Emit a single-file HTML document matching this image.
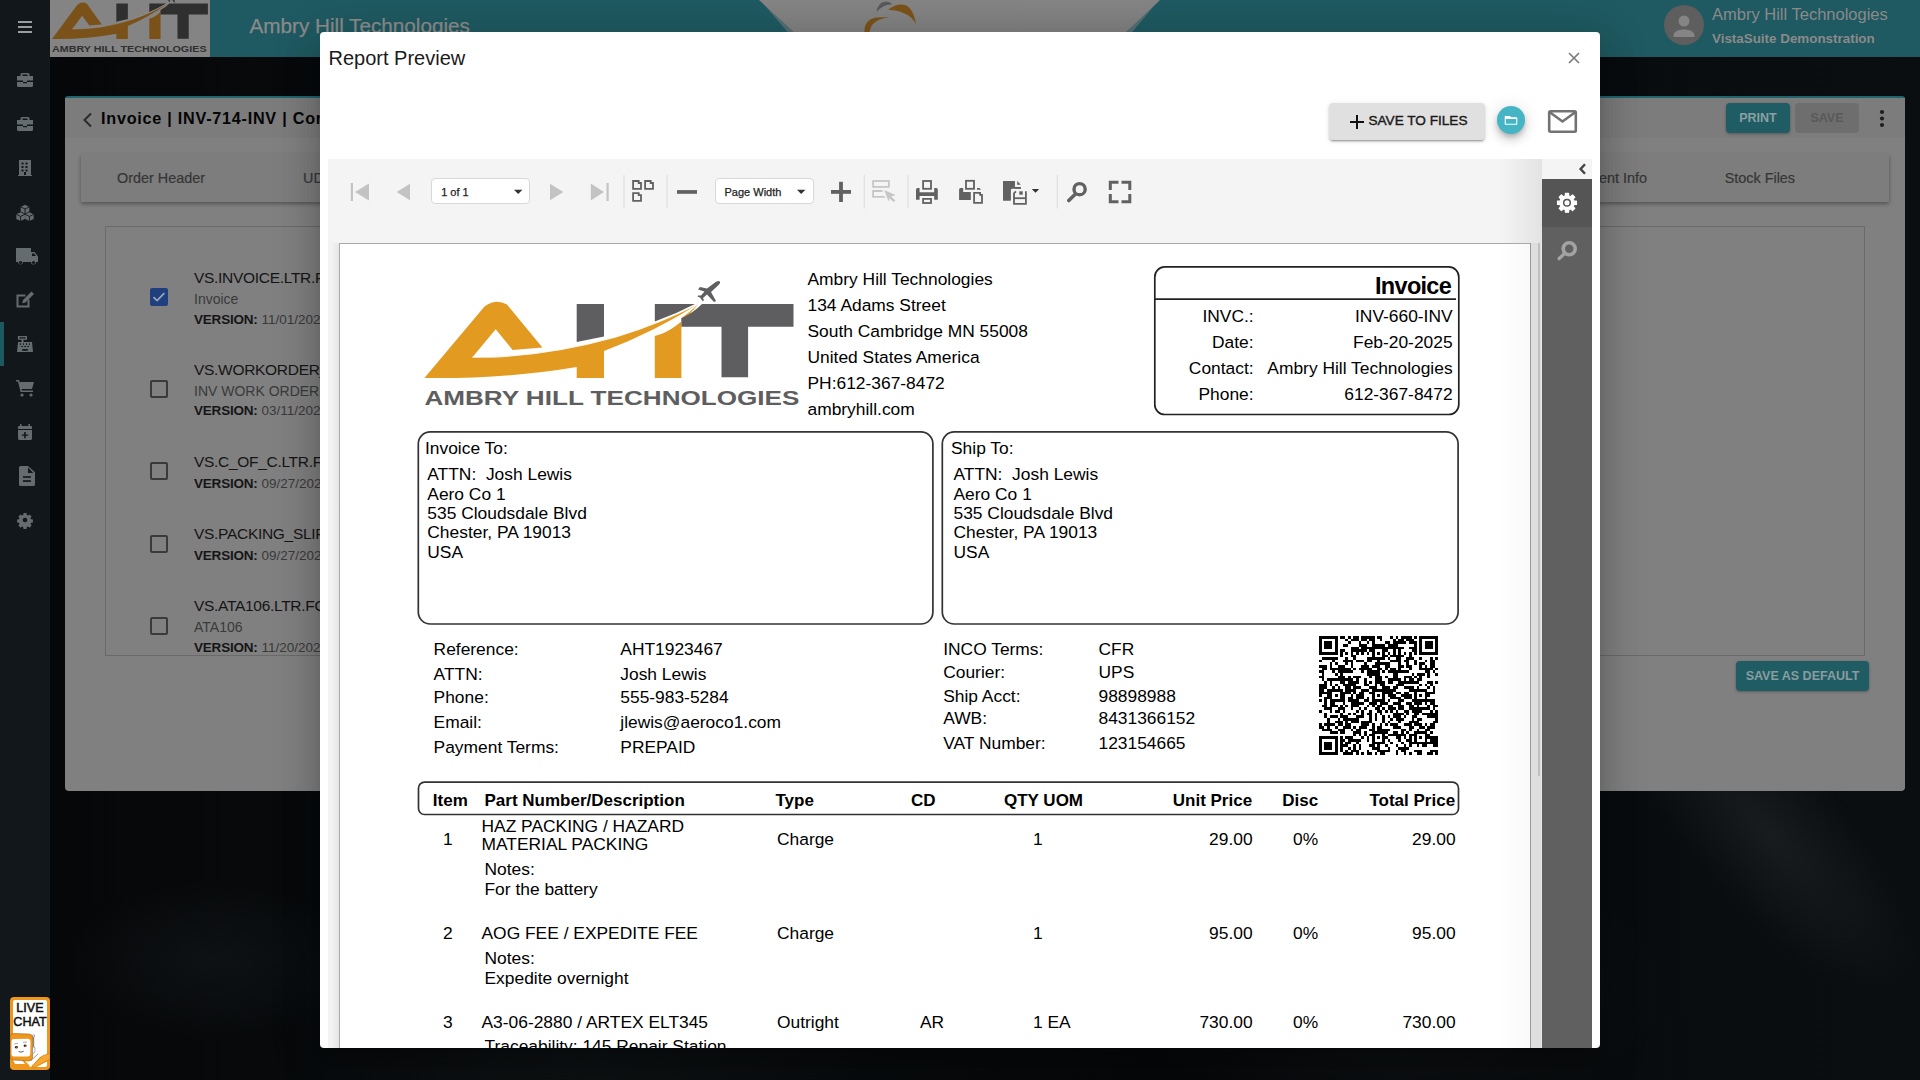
<!DOCTYPE html>
<html><head><meta charset="utf-8">
<style>
*{margin:0;padding:0;box-sizing:border-box}
html,body{width:1920px;height:1080px;overflow:hidden}
body{position:relative;background:#07090b;font-family:"Liberation Sans",sans-serif;color:#000}
.abs{position:absolute}
#bgtex{left:50px;top:57px;width:1870px;height:1023px;background:
 radial-gradient(ellipse 260px 160px at 1350px 930px, rgba(24,28,30,.5), transparent),
 radial-gradient(ellipse 300px 200px at 520px 1000px, rgba(18,22,24,.5), transparent),
 linear-gradient(90deg,#050709 0,#0a0d0f 30%,#06080a 60%,#0b0e10 100%)}
#side{left:0;top:0;width:50px;height:1080px;background:#11171b}
#hdr{left:50px;top:0;width:1870px;height:57px;background:#1f5961}
#logobox{left:50px;top:0;width:160px;height:57px;background:#848484;overflow:hidden}
#hdrtitle{left:249.5px;top:13.5px;font-size:20.7px;color:#8b8b8b;-webkit-text-stroke:.25px #8b8b8b;white-space:nowrap}
#trap{left:759px;top:0;width:401px;height:57px;background:linear-gradient(#858585,#7a7a7a);
 clip-path:polygon(0 0,100% 0,91.5% 56%,8.7% 56%)}
#card{left:65px;top:96px;width:1840px;height:695px;background:#808080;border-top:2px solid #1f646c;border-radius:3px 3px 4px 4px}
#cardhead{left:0;top:0;width:1840px;height:40px;background:#7c7c7c}
.ctitle{left:36px;top:11.4px;font-size:16.2px;font-weight:bold;color:#050505;white-space:nowrap;letter-spacing:.75px}
#tabs{left:16px;top:56px;width:1808px;height:48px;background:#7d7d7d;box-shadow:0 2px 4px rgba(0,0,0,.35)}
.tab{top:16px;font-size:14.4px;color:#363636;white-space:nowrap;-webkit-text-stroke:.2px #363636}
#inner{left:40px;top:128px;width:1760px;height:430px;border:1px solid #6a6a6a}
.cb{width:18px;height:18px;border:2px solid #3a3a3a;border-radius:2px}
.it1{letter-spacing:-.3px;font-size:15.5px;color:#151515;white-space:nowrap}
.it2{font-size:14px;color:#3a3a3a;white-space:nowrap}
.it3{font-size:13.5px;color:#3a3a3a;white-space:nowrap}
.it3 b{color:#161616;letter-spacing:-.2px}
.btn{height:30px;border-radius:4px;font-size:12.5px;font-weight:bold;text-align:center;line-height:30px;letter-spacing:0}
#modal{left:320px;top:32px;width:1280px;height:1016px;background:#fff;border-radius:4px;box-shadow:0 11px 15px -7px rgba(0,0,0,.2),0 24px 38px 3px rgba(0,0,0,.14),0 9px 46px 8px rgba(0,0,0,.12)}
.t{position:absolute;white-space:nowrap;line-height:normal}
.dd{background:#fff;border:1px solid #d8d8d8;border-radius:4px}
</style></head><body>
<div id="bgtex" class="abs"></div>
<div class="abs" style="left:1560px;top:760px;width:420px;height:150px;background:radial-gradient(ellipse at center,rgba(40,46,48,.45),rgba(40,46,48,0) 70%);transform:rotate(48deg);transform-origin:center"></div>
<div class="abs" style="left:60px;top:880px;width:300px;height:160px;background:radial-gradient(ellipse at center,rgba(30,34,36,.35),rgba(30,34,36,0) 70%)"></div>
<div id="side" class="abs"></div>
<div id="hdr" class="abs"></div>
<div class="abs" style="left:0;top:0;width:1920px;height:57px;overflow:hidden"><div class="abs" style="left:755px;top:-6px;width:409px;height:69px;background:rgba(128,128,128,.55);clip-path:polygon(0 0,100% 0,91.5% 60%,8.7% 60%);filter:blur(6px)"></div></div>
<div id="trap" class="abs"></div>
<svg class="abs" style="left:850px;top:0" width="80" height="32" viewBox="850 0 80 32">
 <path d="M876.5 12 Q878 2 886 1.6 Q890 1.8 892.5 4.6 Q884 3.5 876.5 12z" fill="#585858"/>
 <path d="M888 9.8 Q896 3.5 904 4.8 Q913 7 916 24 Q909 11 888 9.8z" fill="#7a5219"/>
 <path d="M864.5 32 Q864 20 876 17.6 Q883 16.8 889.5 17.4 Q871 19 869.5 32z" fill="#7a5219"/>
</svg>
<div id="logobox" class="abs"><svg width="160" height="57" viewBox="418.67 295.7 378.8 118.75" preserveAspectRatio="none"><path d="M423.4 377 L483.5 305.5 Q494.7 297 506 303.5 L541.4 346.5 L511.6 349 L494.7 328.3 L471.4 356.2 Q540 357 615 336 Q660 322 697.9 302.4 Q675 330 653.8 335 L653.8 377 L680.4 377 L680.4 317.3 Q690 310 697.9 302.4 Q655 330 603 350 L603 377 L575.7 377 L575.7 366 Q505 378 423.4 377 Z" fill="#7a5219"/>
<path d="M575.7 303 H603 V335.5 L575.7 341 Z" fill="#2f2f2f"/>
<path d="M653.8 303 H694 Q675 313 653.8 320.5 Z" fill="#2f2f2f"/>
<path d="M701 303 H792.5 V325.7 H747.1 V376.3 H720.5 V325.7 H680.4 V317.3 Q692 312 701 303 Z" fill="#2f2f2f"/>
<path d="M471.4 356.2 Q540 357 615 336 Q660 322 697.9 302.4" fill="none" stroke="#9a9a9a" stroke-width="1.2" opacity=".8"/>
<path d="M699 286 L706 287.5 L714 281.5 Q717 279 719 280.5 Q719.5 282.5 716.5 285 L710 291 L715 300 L713 301 L706 293.5 L702 297 L703 299.5 L701.5 300 L699 296.5 L696.5 295.5 L697 294.5 L700 294.5 L703.5 290.5 L697 288.5 Z" fill="#2f2f2f"/>
<text x="423.4" y="403.5" font-family="Liberation Sans" font-weight="bold" font-size="19.6" textLength="366" lengthAdjust="spacingAndGlyphs" fill="#2f2f2f">AMBRY HILL TECHNOLOGIES</text></svg></div>
<div id="hdrtitle" class="abs">Ambry Hill Technologies</div>
<!-- sidebar icons -->
<svg class="abs" style="left:0;top:0" width="50" height="540" viewBox="0 0 50 540">
 <g fill="#9c9c9c"><rect x="18" y="21" width="14" height="2"/><rect x="18" y="26" width="14" height="2"/><rect x="18" y="31" width="14" height="2"/></g>
 <g fill="#656c70">
  <!-- briefcase 1 -->
  <path d="M22 73h6a1.5 1.5 0 0 1 1.5 1.5V76H33a0 0 0 0 1 0 0v4.5H27v1.5h-4v-1.5H17V76h3.5v-1.5A1.5 1.5 0 0 1 22 73zm.5 1.6V76h5v-1.4zM17 82h6v1.3h4V82h6v3.5a1.5 1.5 0 0 1-1.5 1.5h-13A1.5 1.5 0 0 1 17 85.5z"/>
  <path d="M22 117h6a1.5 1.5 0 0 1 1.5 1.5V120H33v4.5H27v1.5h-4v-1.5H17V120h3.5v-1.5A1.5 1.5 0 0 1 22 117zm.5 1.6V120h5v-1.4zM17 126h6v1.3h4V126h6v3.5a1.5 1.5 0 0 1-1.5 1.5h-13A1.5 1.5 0 0 1 17 129.5z"/>
  <!-- building -->
  <path d="M19 160h12v15h1v1H18v-1h1zm2.5 2.5v2h2v-2zm4 0v2h2v-2zm-4 3.5v2h2v-2zm4 0v2h2v-2zm-4 3.5v2h2v-2zm4 0v2h2v-2zM24 172v3h2v-3z" fill-rule="evenodd"/>
  <!-- cubes -->
  <path d="M25 204.8l4.3 2.1v4.6l-4.3 2.1-4.3-2.1v-4.6zM20.6 212.2l4.3 2.1v4.6l-4.3 2.1-4.3-2.1v-4.6zM29.4 212.2l4.3 2.1v4.6l-4.3 2.1-4.3-2.1v-4.6z"/>
  <path d="M20.7 206.9l4.3 2.1 4.3-2.1M25 209v4.6M16.3 214.3l4.3 2.1 4.3-2.1M20.6 216.4v4.6M25.1 214.3l4.3 2.1 4.3-2.1M29.4 216.4v4.6" fill="none" stroke="#11171b" stroke-width=".9"/>
  <!-- truck -->
  <path d="M16 248h15v4h3.5l3.5 4.5V262h-2a2.5 2.5 0 0 1-5 0h-8a2.5 2.5 0 0 1-5 0H16zm16 5.5V256h4l-2-2.5z" fill-rule="evenodd"/>
  <circle cx="20.5" cy="262.5" r="1.6" fill="#11171b"/><circle cx="33.5" cy="262.5" r="1.6" fill="#11171b"/>
  <!-- edit -->
  <path d="M16.5 294.5h9v2h-7v9h9v-6h2v8h-13z"/>
  <path d="M31.5 291.5l2.5 2.5-8.5 8.5-3.3.8.8-3.3z"/>
  <!-- register -->
  <path d="M17.9 336h9.1v3.7h-3.5v2.3h8.5l1 9.9H17l1-9.9h3.5v-2.3h-3.6zM19.5 337.2v1.3h6v-1.3z" fill-rule="evenodd"/>
  <g fill="#11171b"><rect x="19.9" y="343.3" width="1" height="1.6"/><rect x="22.9" y="343.3" width="1" height="1.6"/><rect x="26" y="343.3" width="1" height="1.6"/><rect x="28.9" y="343.3" width="1" height="1.6"/>
  <rect x="21.2" y="346" width="1.8" height="1"/><rect x="24.2" y="346" width="1.8" height="1"/><rect x="27.2" y="346" width="1.8" height="1"/><rect x="22.2" y="349" width="5.6" height="1.8"/></g>
  <!-- cart -->
  <path d="M16 380h3l.6 2H34l-2 7H21.5l.4 1.5H33v1.6H20.6L18 381.6h-2z"/>
  <circle cx="22" cy="395" r="1.6"/><circle cx="31" cy="395" r="1.6"/>
  <!-- calendar -->
  <path d="M20 424h1.5v2h7v-2H30v2h1a1 1 0 0 1 1 1v2H18v-2a1 1 0 0 1 1-1h1zM18 430h14v8.5a1.5 1.5 0 0 1-1.5 1.5h-11a1.5 1.5 0 0 1-1.5-1.5zm6.2 2v2.4h-2.4v1.4h2.4v2.4h1.6v-2.4h2.4v-1.4h-2.4V432z" fill-rule="evenodd"/>
  <!-- file -->
  <path d="M20.5 466H28l7 6.2V484.4a1.5 1.5 0 0 1-1.5 1.5H20.5a1.5 1.5 0 0 1-1.5-1.5V467.5A1.5 1.5 0 0 1 20.5 466z"/>
  <path d="M28 467.4V473h5.4z" fill="#11171b"/>
  <rect x="23" y="476.2" width="7.9" height="1.6" fill="#11171b"/><rect x="23" y="480.2" width="7.9" height="1.7" fill="#11171b"/>
  <!-- gear -->
  <path transform="translate(25 520) scale(.86) translate(-25 -520)" d="M23.3 512h3.4l.4 2.2 1.3.6 1.9-1.3 2.4 2.4-1.3 1.9.6 1.3 2.2.4v3.4l-2.2.4-.6 1.3 1.3 1.9-2.4 2.4-1.9-1.3-1.3.6-.4 2.2h-3.4l-.4-2.2-1.3-.6-1.9 1.3-2.4-2.4 1.3-1.9-.6-1.3-2.2-.4v-3.4l2.2-.4.6-1.3-1.3-1.9 2.4-2.4 1.9 1.3 1.3-.6zM25 517.3a2.7 2.7 0 1 0 0 5.4 2.7 2.7 0 0 0 0-5.4z" fill-rule="evenodd"/>
 </g>
 <rect x="0" y="322" width="4" height="44" fill="#1d5961"/>
</svg>
<!-- header right -->
<div class="abs" style="left:1664px;top:5px;width:40px;height:40px;border-radius:50%;background:#5e5e5e;overflow:hidden">
  <svg width="40" height="40" viewBox="0 0 40 40"><circle cx="20" cy="16" r="5.5" fill="#858585"/><path d="M9.5 30.5c0-4 5-6 10.5-6s10.5 2 10.5 6v1.5h-21z" fill="#858585"/></svg>
</div>
<div class="abs" style="left:1712px;top:4.6px;font-size:16.5px;color:#8a8a8a;white-space:nowrap">Ambry Hill Technologies</div>
<div class="abs" style="left:1712px;top:30.9px;font-size:13.4px;font-weight:bold;color:#8a8a8a;white-space:nowrap">VistaSuite Demonstration</div>

<!-- card -->
<div id="card" class="abs">
  <div id="cardhead" class="abs"></div>
  <div class="abs ctitle">Invoice | INV-714-INV | Cor</div>
  <div class="abs btn" style="left:1661px;top:5px;width:64px;background:#1f5c64;color:#8aa0a3;box-shadow:0 1px 3px rgba(0,0,0,.3)">PRINT</div>
  <div class="abs btn" style="left:1730px;top:5px;width:64px;background:#6e6e6e;color:#595959">SAVE</div>
  <svg class="abs" style="left:17px;top:14px" width="12" height="16" viewBox="0 0 12 16"><path d="M9 1.5L2.5 8 9 14.5" fill="none" stroke="#2a2a2a" stroke-width="2"/></svg>
  <svg class="abs" style="left:1812px;top:11px" width="10" height="20" viewBox="0 0 10 20"><circle cx="5" cy="3" r="2.1" fill="#1e1e1e"/><circle cx="5" cy="9.5" r="2.1" fill="#1e1e1e"/><circle cx="5" cy="16" r="2.1" fill="#1e1e1e"/></svg>
  <div id="tabs" class="abs">
    <div class="abs tab" style="left:36px">Order Header</div>
    <div class="abs tab" style="left:222px">UDF</div>
    <div class="abs tab" style="right:242px">Document Info</div>
    <div class="abs tab" style="left:1643.7px">Stock Files</div>
  </div>
  <div id="inner" class="abs"></div>
  <!-- list items -->
  <div class="abs" style="left:85px;top:190px;width:18px;height:18px;border-radius:2px;background:#1f3f7e"><svg width="18" height="18" viewBox="0 0 18 18"><path d="M3.5 9.2l3.6 3.4 7.2-7.4" fill="none" stroke="#9aa5bd" stroke-width="1.8"/></svg></div>
  <div class="abs it1" style="left:129px;top:171px">VS.INVOICE.LTR.FORM</div>
  <div class="abs it2" style="left:129px;top:193px">Invoice</div>
  <div class="abs it3" style="left:129px;top:213.5px"><b>VERSION:</b> 11/01/2024</div>

  <div class="abs cb" style="left:85px;top:282px"></div>
  <div class="abs it1" style="left:129px;top:262.6px">VS.WORKORDER_INVOICE</div>
  <div class="abs it2" style="left:129px;top:284.8px">INV WORK ORDER INVOICE</div>
  <div class="abs it3" style="left:129px;top:304.8px"><b>VERSION:</b> 03/11/2024</div>

  <div class="abs cb" style="left:85px;top:364.4px"></div>
  <div class="abs it1" style="left:129px;top:354.9px">VS.C_OF_C.LTR.FORM</div>
  <div class="abs it3" style="left:129px;top:377.7px"><b>VERSION:</b> 09/27/2024</div>

  <div class="abs cb" style="left:85px;top:436.7px"></div>
  <div class="abs it1" style="left:129px;top:426.8px">VS.PACKING_SLIP.FORM</div>
  <div class="abs it3" style="left:129px;top:449.6px"><b>VERSION:</b> 09/27/2024</div>

  <div class="abs cb" style="left:85px;top:518.8px"></div>
  <div class="abs it1" style="left:129px;top:498.7px">VS.ATA106.LTR.FORM</div>
  <div class="abs it2" style="left:129px;top:520.7px">ATA106</div>
  <div class="abs it3" style="left:129px;top:541.6px"><b>VERSION:</b> 11/20/2024</div>

  <div class="abs btn" style="left:1671px;top:562.5px;width:133px;background:#1f5c64;color:#8a9c9f;box-shadow:0 1px 3px rgba(0,0,0,.3)">SAVE AS DEFAULT</div>
</div>
<!-- live chat -->
<div class="abs" style="left:10px;top:997px;width:40px;height:72.5px;border-radius:4px;background:#ef961c"></div>
<div class="abs" style="left:13px;top:1000px;width:34px;height:66.5px;border-radius:2px;background:#fff"></div>
<div class="abs" style="left:10px;top:1002px;width:40px;text-align:center;font-size:12.6px;line-height:13.8px;color:#111;-webkit-text-stroke:.5px #111">LIVE<br>CHAT</div>
<svg class="abs" style="left:10px;top:1030px" width="40" height="40" viewBox="0 30 40 40">
 <path d="M20 68 L30 57 L40 53 L40 60 L22 69 Z" fill="#ef961c"/>
 <path d="M22 66 L33 55.5 L40 53.2 L40 59 L23.5 68 Z" fill="#f5a833" stroke="#b86d10" stroke-width=".4"/>
 <path d="M1 60 Q6 56 12 58 L20 66 L18 69 L1 68 Z" fill="#ef961c"/>
 <path d="M3 60 Q8 57 12 60 L15 64 L5 64 Z" fill="#fff"/>
 <path d="M21 60.5 L28 54" stroke="#555" stroke-width=".6"/>
 <path d="M0 36 Q1 33 5 33.5 L19 34 Q23 34.5 23 38 L22.5 58 Q22 61 18.5 61 L3 60 Q0 59.5 0 56 Z" fill="#ef961c" stroke="#8a5410" stroke-width=".5"/>
 <path d="M1.5 41 Q1.5 39 4 39 L18 38.8 Q20.5 39 20.5 41.5 L20.3 54 Q20 56.5 17.5 56.5 L4 56.5 Q1.5 56.5 1.5 54 Z" fill="#fff"/>
 <ellipse cx="6.4" cy="47.3" rx="1.5" ry="1.3" fill="#3a2410"/><ellipse cx="15.1" cy="45.8" rx="1.5" ry="1.3" fill="#3a2410"/>
 <circle cx="6.8" cy="47.6" r=".6" fill="#e08a20"/><circle cx="15.5" cy="46.1" r=".6" fill="#e08a20"/>
 <path d="M4.5 44 Q6 43 8 43.5 M13 42.5 Q15 41.8 17 42.2" stroke="#555" stroke-width=".5" fill="none"/>
 <path d="M8.6 51.5 Q11 53 13.6 51.2" fill="none" stroke="#333" stroke-width=".8"/>
 <path d="M23.8 50 L23.6 37" stroke="#666" stroke-width=".9"/><circle cx="23.6" cy="36" r="1.2" fill="#fff" stroke="#666" stroke-width=".6"/>
 <rect x="22.5" y="47" width="2.4" height="6" rx="1" fill="#fff" stroke="#666" stroke-width=".5"/>
</svg>
<div id="modal" class="abs"></div>
<div class="t" style="left:328.5px;top:46.70px;font-size:20px;color:#1b1b1b;">Report Preview</div>
<svg class="abs" style="left:1567px;top:51px" width="14" height="14" viewBox="0 0 14 14"><path d="M2 2L12 12M12 2L2 12" stroke="#7a7a7a" stroke-width="1.6"/></svg>
<div class="abs" style="left:1329px;top:103px;width:156px;height:37px;border-radius:4px;background:#e0e0e0;box-shadow:0 3px 1px -2px rgba(0,0,0,.2),0 2px 2px 0 rgba(0,0,0,.14),0 1px 5px 0 rgba(0,0,0,.12)"></div>
<svg class="abs" style="left:1349px;top:114px" width="16" height="16" viewBox="0 0 16 16"><path d="M8 1v14M1 8h14" stroke="#111" stroke-width="2"/></svg>
<div class="t" style="left:1368.5px;top:113.49px;font-size:13.6px;color:#1a1a1a;-webkit-text-stroke:.4px #1a1a1a;">SAVE TO FILES</div>
<div class="abs" style="left:1497px;top:106px;width:28px;height:28px;border-radius:50%;background:#45b4c5;box-shadow:0 3px 5px -1px rgba(0,0,0,.2),0 6px 10px 0 rgba(0,0,0,.14),0 1px 18px 0 rgba(0,0,0,.12)"><svg width="28" height="28" viewBox="0 0 28 28"><path d="M9 10h4l1.2 1.3H19.5a.8.8 0 0 1 .8.8V18a.8.8 0 0 1-.8.8h-11a.8.8 0 0 1-.8-.8v-7.2A.8.8 0 0 1 9 10zm-.2 3.1v4.6h10.4v-4.6z" fill="#fff" fill-rule="evenodd"/></svg></div>
<svg class="abs" style="left:1547px;top:109px" width="32" height="25" viewBox="0 0 32 25"><rect x="2.2" y="2.2" width="26.6" height="20.6" rx="1.2" fill="none" stroke="#727272" stroke-width="2.6"/><path d="M2.8 3.2L15.5 12.5 28.2 3.2" fill="none" stroke="#727272" stroke-width="2.6"/></svg>
<div class="abs" style="left:328px;top:159px;width:1214px;height:889px;background:#f4f4f4"></div>
<div class="abs" style="left:1500px;top:159px;width:42px;height:84px;background:linear-gradient(90deg,rgba(0,0,0,0),rgba(0,0,0,.07))"></div>
<div class="abs" style="left:328px;top:243px;width:11px;height:805px;background:linear-gradient(90deg,#f4f4f4 0,#f2f2f2 40%,#e6e6e6 100%)"></div>
<svg class="abs" style="left:0;top:0" width="1920" height="260" viewBox="0 0 1920 260"><rect x="350.8" y="183" width="2.2" height="18" fill="#c3c3c3"/><path d="M355 192L369 183.5V200.5z" fill="#c3c3c3"/><path d="M396.7 192L410 183.8V200.2z" fill="#c3c3c3"/><path d="M563.3 192L550 183.8V200.2z" fill="#c3c3c3"/><rect x="606.5" y="183" width="2.2" height="18" fill="#c3c3c3"/><path d="M604 192L590.8 183.5V200.5z" fill="#c3c3c3"/><rect x="623.5" y="175" width="1" height="33.5" fill="#dcdcdc"/><rect x="666.5" y="175" width="1" height="33.5" fill="#dcdcdc"/><rect x="863.8" y="175" width="1" height="33.5" fill="#dcdcdc"/><rect x="907.5" y="175" width="1" height="33.5" fill="#dcdcdc"/><rect x="1056.8" y="175" width="1" height="33.5" fill="#dcdcdc"/><path d="M633.1 181.0H638.7V183.0H641.0000000000001V188.79999999999998H633.1z" fill="none" stroke="#616161" stroke-width="1.8" stroke-linejoin="miter"/><path d="M645.1 181.0H650.7V183.0H653.0000000000001V188.79999999999998H645.1z" fill="none" stroke="#616161" stroke-width="1.8" stroke-linejoin="miter"/><path d="M633.1 193.1H638.7V195.1H641.0000000000001V200.89999999999998H633.1z" fill="none" stroke="#616161" stroke-width="1.8" stroke-linejoin="miter"/><rect x="677" y="190.1" width="20" height="3.7" fill="#616161"/><rect x="831" y="190" width="20" height="3.8" fill="#616161"/><rect x="839.1" y="181.8" width="3.8" height="20.2" fill="#616161"/><rect x="873.1" y="181" width="15.8" height="5.9" fill="none" stroke="#c6c6c6" stroke-width="1.8"/><path d="M882.5 191H873.1V196.9H884.8" fill="none" stroke="#c6c6c6" stroke-width="1.8"/><path d="M884.2 190.1L895.6 195L891.2 196.6L895.4 200.4L893.6 202L889.4 198.2L888.6 201.4z" fill="#c6c6c6"/><rect x="923.1" y="181" width="7.9" height="7.8" fill="none" stroke="#616161" stroke-width="1.8"/><path d="M917.5 188H919.6V192.2H934.2V188H936.3A1.5 1.5 0 0 1 937.8 189.5V199.7H934.2V196H919.6V199.7H916V189.5A1.5 1.5 0 0 1 917.5 188z" fill="#616161"/><rect x="923.1" y="198.9" width="7.9" height="4.1" fill="none" stroke="#616161" stroke-width="1.8"/><rect x="966" y="180.8" width="8" height="8" fill="none" stroke="#616161" stroke-width="1.8"/><path d="M960.6 188H963.2V192H970.8V199.9H959.1V189.5A1.5 1.5 0 0 1 960.6 188z" fill="#616161"/><path d="M977 187.9H979.5L981 189.7H977z" fill="#616161"/><path d="M974.1 192.9H980.1V194.8H982V202.9H974.1z" fill="none" stroke="#616161" stroke-width="1.8"/><path d="M1003.1 181.1H1014.8V188.7H1020.8V187.1H1010.7V200.6H1003.1z" fill="#616161"/><path d="M1003.1 181.1H1014.8V187.1H1020.8V188.7H1012.2A1.5 1.5 0 0 0 1010.7 190.2V200.6H1003.1z" fill="#616161"/><path d="M1017.2 181.1L1020.8 184.8H1017.2z" fill="#616161"/><path d="M1015.9 191.3L1014 193.4V203.9H1025.9V191.3" fill="none" stroke="#616161" stroke-width="1.8" stroke-linejoin="miter"/><rect x="1014" y="197.3" width="12" height="1.8" fill="#616161"/><rect x="1019.3" y="191.3" width="3.4" height="3.4" fill="#616161"/><path d="M1031.8 188.9H1039.2L1035.5 192.8z" fill="#333"/><circle cx="1079.6" cy="189.2" r="5.6" fill="none" stroke="#616161" stroke-width="3.4"/><path d="M1075.2 194.2L1068.8 200.5" stroke="#616161" stroke-width="3.6" stroke-linecap="round"/><path d="M1110.3 190V182.3H1118.5M1121.5 182.3H1129.8V190M1129.8 194V201.8H1121.5M1118.5 201.8H1110.3V194" fill="none" stroke="#616161" stroke-width="3"/></svg>
<div class="abs dd" style="left:431px;top:178.3px;width:99px;height:26.2px"></div>
<div class="t" style="left:441.2px;top:185.6px;font-size:11px;color:#222;-webkit-text-stroke:.25px #222">1 of 1</div>
<div class="abs dd" style="left:714.5px;top:178.3px;width:99px;height:26.2px"></div>
<div class="t" style="left:724.5px;top:185.6px;font-size:11px;color:#222;-webkit-text-stroke:.25px #222">Page Width</div>
<svg class="abs" style="left:0;top:0" width="1920" height="260" viewBox="0 0 1920 260"><path d="M514 189.8H522.4L518.2 194z" fill="#333"/><path d="M797 189.8H805.4L801.2 194z" fill="#333"/></svg>
<div class="abs" style="left:1542px;top:159px;width:50px;height:20px;background:#f4f4f4"></div>
<div class="abs" style="left:1542px;top:179px;width:50px;height:48px;background:#555"></div>
<div class="abs" style="left:1542px;top:227px;width:50px;height:821px;background:#606060"></div>
<svg class="abs" style="left:1542px;top:159px" width="50" height="120" viewBox="0 0 50 120"><path d="M43 5.2L38.6 10 43 14.8" fill="none" stroke="#444" stroke-width="2.4"/><path d="M34.47 42.22 L34.47 45.38 L31.77 45.59 L31.05 47.32 L32.81 49.38 L30.58 51.61 L28.52 49.85 L26.79 50.57 L26.58 53.27 L23.42 53.27 L23.21 50.57 L21.48 49.85 L19.42 51.61 L17.19 49.38 L18.95 47.32 L18.23 45.59 L15.53 45.38 L15.53 42.22 L18.23 42.01 L18.95 40.28 L17.19 38.22 L19.42 35.99 L21.48 37.75 L23.21 37.03 L23.42 34.33 L26.58 34.33 L26.79 37.03 L28.52 37.75 L30.58 35.99 L32.81 38.22 L31.05 40.28 L31.77 42.01Z" fill="#fff" stroke="#fff" stroke-width="1.2" stroke-linejoin="round"/><circle cx="25" cy="43.8" r="3.3" fill="none" stroke="#555" stroke-width="1.5"/><circle cx="27.2" cy="89.7" r="6" fill="none" stroke="#a3a3a3" stroke-width="3.6"/><path d="M22.5 94.6L17.2 99.6" stroke="#a3a3a3" stroke-width="3.4" stroke-linecap="round"/></svg>
<div class="abs" style="left:339px;top:243px;width:1191px;height:805px;background:#fff;border-left:1px solid #a9a9a9;border-top:1px solid #a9a9a9;overflow:hidden">
<div class="abs" style="left:-339px;top:-243px;width:1920px;height:1080px">
<div class="abs" style="left:1495px;top:243px;width:35px;height:805px;background:linear-gradient(90deg,rgba(0,0,0,0),rgba(0,0,0,.025))"></div>
<svg class="abs" style="left:0;top:0" width="1920" height="1080" viewBox="0 0 1920 1080"><path d="M423.4 377 L483.5 305.5 Q494.7 297 506 303.5 L541.4 346.5 L511.6 349 L494.7 328.3 L471.4 356.2 Q540 357 615 336 Q660 322 697.9 302.4 Q675 330 653.8 335 L653.8 377 L680.4 377 L680.4 317.3 Q690 310 697.9 302.4 Q655 330 603 350 L603 377 L575.7 377 L575.7 366 Q505 378 423.4 377 Z" fill="#e39a21"/>
<path d="M575.7 303 H603 V335.5 L575.7 341 Z" fill="#5e5e60"/>
<path d="M653.8 303 H694 Q675 313 653.8 320.5 Z" fill="#5e5e60"/>
<path d="M701 303 H792.5 V325.7 H747.1 V376.3 H720.5 V325.7 H680.4 V317.3 Q692 312 701 303 Z" fill="#5e5e60"/>
<path d="M471.4 356.2 Q540 357 615 336 Q660 322 697.9 302.4" fill="none" stroke="#fff" stroke-width="1.2" opacity=".8"/>
<path d="M699 286 L706 287.5 L714 281.5 Q717 279 719 280.5 Q719.5 282.5 716.5 285 L710 291 L715 300 L713 301 L706 293.5 L702 297 L703 299.5 L701.5 300 L699 296.5 L696.5 295.5 L697 294.5 L700 294.5 L703.5 290.5 L697 288.5 Z" fill="#5e5e60"/>
<text x="423.4" y="403.5" font-family="Liberation Sans" font-weight="bold" font-size="19.6" textLength="375" lengthAdjust="spacingAndGlyphs" fill="#5e5e60">AMBRY HILL TECHNOLOGIES</text></svg>
<div class="t" style="left:806.5px;top:267.95px;font-size:17.4px;color:#000;">Ambry Hill Technologies</div>
<div class="t" style="left:806.5px;top:293.95px;font-size:17.4px;color:#000;">134 Adams Street</div>
<div class="t" style="left:806.5px;top:319.95px;font-size:17.4px;color:#000;">South Cambridge MN 55008</div>
<div class="t" style="left:806.5px;top:345.95px;font-size:17.4px;color:#000;">United States America</div>
<div class="t" style="left:806.5px;top:371.95px;font-size:17.4px;color:#000;">PH:612-367-8472</div>
<div class="t" style="left:806.5px;top:398.45px;font-size:17.4px;color:#000;">ambryhill.com</div>
<svg class="abs" style="left:0;top:0" width="1920" height="1080" viewBox="0 0 1920 1080" fill="none" stroke="#222"><rect x="1153.8" y="265.9" width="304" height="147.6" rx="10" stroke-width="1.7"/><path d="M1153.5 298.2H1455" stroke-width="1.8"/><rect x="417.3" y="430.8" width="514.6" height="192.2" rx="12" stroke="#333" stroke-width="1.7"/><rect x="941.3" y="430.8" width="515.8" height="192.2" rx="12" stroke="#333" stroke-width="1.7"/><rect x="417.5" y="781.2" width="1040" height="32.3" rx="6" stroke="#333" stroke-width="1.7"/></svg>
<div class="t" style="right:469.9px;top:271.63px;font-size:23.5px;font-weight:bold;color:#000;letter-spacing:-0.7px;">Invoice</div>
<div class="t" style="right:667.4px;top:304.95px;font-size:17.4px;color:#000;">INVC.:</div>
<div class="t" style="right:468.4px;top:304.95px;font-size:17.4px;color:#000;">INV-660-INV</div>
<div class="t" style="right:667.4px;top:331.35px;font-size:17.4px;color:#000;">Date:</div>
<div class="t" style="right:468.4px;top:331.35px;font-size:17.4px;color:#000;">Feb-20-2025</div>
<div class="t" style="right:667.4px;top:357.35px;font-size:17.4px;color:#000;">Contact:</div>
<div class="t" style="right:468.4px;top:357.35px;font-size:17.4px;color:#000;">Ambry Hill Technologies</div>
<div class="t" style="right:667.4px;top:383.45px;font-size:17.4px;color:#000;">Phone:</div>
<div class="t" style="right:468.4px;top:383.45px;font-size:17.4px;color:#000;">612-367-8472</div>
<div class="t" style="left:424.0px;top:436.95px;font-size:17.4px;color:#000;">Invoice To:</div>
<div class="t" style="left:950.0px;top:436.95px;font-size:17.4px;color:#000;">Ship To:</div>
<div class="t" style="left:426.3px;top:462.95px;font-size:17.4px;color:#000;">ATTN:&nbsp; Josh Lewis</div>
<div class="t" style="left:952.5px;top:462.95px;font-size:17.4px;color:#000;">ATTN:&nbsp; Josh Lewis</div>
<div class="t" style="left:426.3px;top:482.95px;font-size:17.4px;color:#000;">Aero Co 1</div>
<div class="t" style="left:952.5px;top:482.95px;font-size:17.4px;color:#000;">Aero Co 1</div>
<div class="t" style="left:426.3px;top:501.95px;font-size:17.4px;color:#000;">535 Cloudsdale Blvd</div>
<div class="t" style="left:952.5px;top:501.95px;font-size:17.4px;color:#000;">535 Cloudsdale Blvd</div>
<div class="t" style="left:426.3px;top:521.45px;font-size:17.4px;color:#000;">Chester, PA 19013</div>
<div class="t" style="left:952.5px;top:521.45px;font-size:17.4px;color:#000;">Chester, PA 19013</div>
<div class="t" style="left:426.3px;top:540.55px;font-size:17.4px;color:#000;">USA</div>
<div class="t" style="left:952.5px;top:540.55px;font-size:17.4px;color:#000;">USA</div>
<div class="t" style="left:432.6px;top:637.95px;font-size:17.4px;color:#000;">Reference:</div>
<div class="t" style="left:619.3px;top:637.95px;font-size:17.4px;color:#000;">AHT1923467</div>
<div class="t" style="left:432.6px;top:662.75px;font-size:17.4px;color:#000;">ATTN:</div>
<div class="t" style="left:619.3px;top:662.75px;font-size:17.4px;color:#000;">Josh Lewis</div>
<div class="t" style="left:432.6px;top:685.95px;font-size:17.4px;color:#000;">Phone:</div>
<div class="t" style="left:619.3px;top:685.95px;font-size:17.4px;color:#000;">555-983-5284</div>
<div class="t" style="left:432.6px;top:710.95px;font-size:17.4px;color:#000;">Email:</div>
<div class="t" style="left:619.3px;top:710.95px;font-size:17.4px;color:#000;">jlewis@aeroco1.com</div>
<div class="t" style="left:432.6px;top:735.55px;font-size:17.4px;color:#000;">Payment Terms:</div>
<div class="t" style="left:619.3px;top:735.55px;font-size:17.4px;color:#000;">PREPAID</div>
<div class="t" style="left:942.2px;top:637.95px;font-size:17.4px;color:#000;">INCO Terms:</div>
<div class="t" style="left:1097.5px;top:637.95px;font-size:17.4px;color:#000;">CFR</div>
<div class="t" style="left:942.2px;top:660.95px;font-size:17.4px;color:#000;">Courier:</div>
<div class="t" style="left:1097.5px;top:660.95px;font-size:17.4px;color:#000;">UPS</div>
<div class="t" style="left:942.2px;top:684.55px;font-size:17.4px;color:#000;">Ship Acct:</div>
<div class="t" style="left:1097.5px;top:684.55px;font-size:17.4px;color:#000;">98898988</div>
<div class="t" style="left:942.2px;top:707.35px;font-size:17.4px;color:#000;">AWB:</div>
<div class="t" style="left:1097.5px;top:707.35px;font-size:17.4px;color:#000;">8431366152</div>
<div class="t" style="left:942.2px;top:731.95px;font-size:17.4px;color:#000;">VAT Number:</div>
<div class="t" style="left:1097.5px;top:731.95px;font-size:17.4px;color:#000;">123154665</div>
<svg class="abs" style="left:1318.4px;top:635.2px" width="119" height="119" viewBox="0 0 118.8 118.8"><path d="M0.00 0.00h18.48v2.64h-18.48zM21.12 0.00h5.28v2.64h-5.28zM29.04 0.00h2.64v2.64h-2.64zM34.32 0.00h5.28v2.64h-5.28zM42.24 0.00h13.20v2.64h-13.20zM58.08 0.00h5.28v2.64h-5.28zM71.28 0.00h2.64v2.64h-2.64zM76.56 0.00h2.64v2.64h-2.64zM81.84 0.00h10.56v2.64h-10.56zM95.04 0.00h2.64v2.64h-2.64zM100.32 0.00h18.48v2.64h-18.48zM0.00 2.64h2.64v2.64h-2.64zM15.84 2.64h2.64v2.64h-2.64zM26.40 2.64h2.64v2.64h-2.64zM31.68 2.64h7.92v2.64h-7.92zM42.24 2.64h5.28v2.64h-5.28zM50.16 2.64h5.28v2.64h-5.28zM60.72 2.64h2.64v2.64h-2.64zM73.92 2.64h2.64v2.64h-2.64zM79.20 2.64h5.28v2.64h-5.28zM87.12 2.64h7.92v2.64h-7.92zM100.32 2.64h2.64v2.64h-2.64zM116.16 2.64h2.64v2.64h-2.64zM0.00 5.28h2.64v2.64h-2.64zM5.28 5.28h7.92v2.64h-7.92zM15.84 5.28h2.64v2.64h-2.64zM29.04 5.28h2.64v2.64h-2.64zM39.60 5.28h2.64v2.64h-2.64zM47.52 5.28h2.64v2.64h-2.64zM52.80 5.28h2.64v2.64h-2.64zM66.00 5.28h5.28v2.64h-5.28zM73.92 5.28h13.20v2.64h-13.20zM89.76 5.28h7.92v2.64h-7.92zM100.32 5.28h2.64v2.64h-2.64zM105.60 5.28h7.92v2.64h-7.92zM116.16 5.28h2.64v2.64h-2.64zM0.00 7.92h2.64v2.64h-2.64zM5.28 7.92h7.92v2.64h-7.92zM15.84 7.92h2.64v2.64h-2.64zM23.76 7.92h5.28v2.64h-5.28zM39.60 7.92h7.92v2.64h-7.92zM52.80 7.92h13.20v2.64h-13.20zM68.64 7.92h10.56v2.64h-10.56zM95.04 7.92h2.64v2.64h-2.64zM100.32 7.92h2.64v2.64h-2.64zM105.60 7.92h7.92v2.64h-7.92zM116.16 7.92h2.64v2.64h-2.64zM0.00 10.56h2.64v2.64h-2.64zM5.28 10.56h7.92v2.64h-7.92zM15.84 10.56h2.64v2.64h-2.64zM31.68 10.56h7.92v2.64h-7.92zM42.24 10.56h42.24v2.64h-42.24zM89.76 10.56h7.92v2.64h-7.92zM100.32 10.56h2.64v2.64h-2.64zM105.60 10.56h7.92v2.64h-7.92zM116.16 10.56h2.64v2.64h-2.64zM0.00 13.20h2.64v2.64h-2.64zM15.84 13.20h2.64v2.64h-2.64zM21.12 13.20h5.28v2.64h-5.28zM31.68 13.20h15.84v2.64h-15.84zM50.16 13.20h5.28v2.64h-5.28zM63.36 13.20h5.28v2.64h-5.28zM73.92 13.20h2.64v2.64h-2.64zM79.20 13.20h2.64v2.64h-2.64zM92.40 13.20h5.28v2.64h-5.28zM100.32 13.20h2.64v2.64h-2.64zM116.16 13.20h2.64v2.64h-2.64zM0.00 15.84h18.48v2.64h-18.48zM21.12 15.84h2.64v2.64h-2.64zM26.40 15.84h2.64v2.64h-2.64zM31.68 15.84h2.64v2.64h-2.64zM36.96 15.84h2.64v2.64h-2.64zM42.24 15.84h2.64v2.64h-2.64zM47.52 15.84h2.64v2.64h-2.64zM52.80 15.84h2.64v2.64h-2.64zM58.08 15.84h2.64v2.64h-2.64zM63.36 15.84h2.64v2.64h-2.64zM68.64 15.84h2.64v2.64h-2.64zM73.92 15.84h2.64v2.64h-2.64zM79.20 15.84h2.64v2.64h-2.64zM84.48 15.84h2.64v2.64h-2.64zM89.76 15.84h2.64v2.64h-2.64zM95.04 15.84h2.64v2.64h-2.64zM100.32 15.84h18.48v2.64h-18.48zM21.12 18.48h2.64v2.64h-2.64zM31.68 18.48h5.28v2.64h-5.28zM52.80 18.48h2.64v2.64h-2.64zM63.36 18.48h5.28v2.64h-5.28zM71.28 18.48h13.20v2.64h-13.20zM89.76 18.48h2.64v2.64h-2.64zM2.64 21.12h15.84v2.64h-15.84zM26.40 21.12h2.64v2.64h-2.64zM34.32 21.12h2.64v2.64h-2.64zM47.52 21.12h18.48v2.64h-18.48zM68.64 21.12h2.64v2.64h-2.64zM76.56 21.12h5.28v2.64h-5.28zM87.12 21.12h7.92v2.64h-7.92zM100.32 21.12h2.64v2.64h-2.64zM110.88 21.12h2.64v2.64h-2.64zM116.16 21.12h2.64v2.64h-2.64zM0.00 23.76h2.64v2.64h-2.64zM13.20 23.76h2.64v2.64h-2.64zM23.76 23.76h10.56v2.64h-10.56zM36.96 23.76h7.92v2.64h-7.92zM47.52 23.76h5.28v2.64h-5.28zM58.08 23.76h2.64v2.64h-2.64zM71.28 23.76h10.56v2.64h-10.56zM84.48 23.76h5.28v2.64h-5.28zM95.04 23.76h2.64v2.64h-2.64zM105.60 23.76h2.64v2.64h-2.64zM110.88 23.76h5.28v2.64h-5.28zM10.56 26.40h2.64v2.64h-2.64zM15.84 26.40h2.64v2.64h-2.64zM26.40 26.40h2.64v2.64h-2.64zM31.68 26.40h2.64v2.64h-2.64zM44.88 26.40h2.64v2.64h-2.64zM55.44 26.40h15.84v2.64h-15.84zM79.20 26.40h2.64v2.64h-2.64zM87.12 26.40h2.64v2.64h-2.64zM95.04 26.40h2.64v2.64h-2.64zM100.32 26.40h5.28v2.64h-5.28zM110.88 26.40h5.28v2.64h-5.28zM0.00 29.04h7.92v2.64h-7.92zM10.56 29.04h2.64v2.64h-2.64zM18.48 29.04h7.92v2.64h-7.92zM31.68 29.04h2.64v2.64h-2.64zM42.24 29.04h7.92v2.64h-7.92zM52.80 29.04h7.92v2.64h-7.92zM66.00 29.04h5.28v2.64h-5.28zM79.20 29.04h5.28v2.64h-5.28zM87.12 29.04h5.28v2.64h-5.28zM100.32 29.04h2.64v2.64h-2.64zM105.60 29.04h2.64v2.64h-2.64zM110.88 29.04h5.28v2.64h-5.28zM2.64 31.68h5.28v2.64h-5.28zM10.56 31.68h21.12v2.64h-21.12zM34.32 31.68h2.64v2.64h-2.64zM39.60 31.68h13.20v2.64h-13.20zM58.08 31.68h5.28v2.64h-5.28zM66.00 31.68h2.64v2.64h-2.64zM71.28 31.68h5.28v2.64h-5.28zM79.20 31.68h2.64v2.64h-2.64zM89.76 31.68h2.64v2.64h-2.64zM100.32 31.68h13.20v2.64h-13.20zM116.16 31.68h2.64v2.64h-2.64zM0.00 34.32h5.28v2.64h-5.28zM13.20 34.32h2.64v2.64h-2.64zM18.48 34.32h15.84v2.64h-15.84zM42.24 34.32h2.64v2.64h-2.64zM47.52 34.32h13.20v2.64h-13.20zM63.36 34.32h2.64v2.64h-2.64zM68.64 34.32h21.12v2.64h-21.12zM105.60 34.32h5.28v2.64h-5.28zM113.52 34.32h2.64v2.64h-2.64zM2.64 36.96h2.64v2.64h-2.64zM15.84 36.96h2.64v2.64h-2.64zM21.12 36.96h2.64v2.64h-2.64zM47.52 36.96h13.20v2.64h-13.20zM73.92 36.96h5.28v2.64h-5.28zM92.40 36.96h2.64v2.64h-2.64zM97.68 36.96h7.92v2.64h-7.92zM108.24 36.96h2.64v2.64h-2.64zM116.16 36.96h2.64v2.64h-2.64zM0.00 39.60h5.28v2.64h-5.28zM18.48 39.60h7.92v2.64h-7.92zM29.04 39.60h2.64v2.64h-2.64zM34.32 39.60h7.92v2.64h-7.92zM50.16 39.60h2.64v2.64h-2.64zM55.44 39.60h7.92v2.64h-7.92zM66.00 39.60h2.64v2.64h-2.64zM73.92 39.60h5.28v2.64h-5.28zM84.48 39.60h7.92v2.64h-7.92zM95.04 39.60h2.64v2.64h-2.64zM100.32 39.60h2.64v2.64h-2.64zM108.24 39.60h2.64v2.64h-2.64zM2.64 42.24h2.64v2.64h-2.64zM7.92 42.24h26.40v2.64h-26.40zM36.96 42.24h2.64v2.64h-2.64zM44.88 42.24h2.64v2.64h-2.64zM55.44 42.24h7.92v2.64h-7.92zM68.64 42.24h13.20v2.64h-13.20zM84.48 42.24h2.64v2.64h-2.64zM89.76 42.24h5.28v2.64h-5.28zM97.68 42.24h5.28v2.64h-5.28zM5.28 44.88h2.64v2.64h-2.64zM10.56 44.88h2.64v2.64h-2.64zM21.12 44.88h5.28v2.64h-5.28zM29.04 44.88h10.56v2.64h-10.56zM44.88 44.88h2.64v2.64h-2.64zM50.16 44.88h2.64v2.64h-2.64zM55.44 44.88h10.56v2.64h-10.56zM68.64 44.88h5.28v2.64h-5.28zM79.20 44.88h21.12v2.64h-21.12zM108.24 44.88h5.28v2.64h-5.28zM116.16 44.88h2.64v2.64h-2.64zM0.00 47.52h7.92v2.64h-7.92zM10.56 47.52h2.64v2.64h-2.64zM15.84 47.52h2.64v2.64h-2.64zM23.76 47.52h13.20v2.64h-13.20zM44.88 47.52h5.28v2.64h-5.28zM55.44 47.52h2.64v2.64h-2.64zM60.72 47.52h5.28v2.64h-5.28zM76.56 47.52h7.92v2.64h-7.92zM100.32 47.52h2.64v2.64h-2.64zM105.60 47.52h2.64v2.64h-2.64zM110.88 47.52h2.64v2.64h-2.64zM0.00 50.16h7.92v2.64h-7.92zM13.20 50.16h2.64v2.64h-2.64zM18.48 50.16h2.64v2.64h-2.64zM26.40 50.16h5.28v2.64h-5.28zM34.32 50.16h7.92v2.64h-7.92zM50.16 50.16h7.92v2.64h-7.92zM63.36 50.16h7.92v2.64h-7.92zM73.92 50.16h5.28v2.64h-5.28zM84.48 50.16h10.56v2.64h-10.56zM97.68 50.16h2.64v2.64h-2.64zM108.24 50.16h2.64v2.64h-2.64zM113.52 50.16h2.64v2.64h-2.64zM0.00 52.80h5.28v2.64h-5.28zM7.92 52.80h15.84v2.64h-15.84zM26.40 52.80h10.56v2.64h-10.56zM42.24 52.80h7.92v2.64h-7.92zM52.80 52.80h23.76v2.64h-23.76zM89.76 52.80h18.48v2.64h-18.48zM113.52 52.80h2.64v2.64h-2.64zM0.00 55.44h13.20v2.64h-13.20zM21.12 55.44h10.56v2.64h-10.56zM34.32 55.44h2.64v2.64h-2.64zM39.60 55.44h5.28v2.64h-5.28zM50.16 55.44h5.28v2.64h-5.28zM63.36 55.44h10.56v2.64h-10.56zM76.56 55.44h5.28v2.64h-5.28zM84.48 55.44h5.28v2.64h-5.28zM95.04 55.44h2.64v2.64h-2.64zM105.60 55.44h10.56v2.64h-10.56zM0.00 58.08h2.64v2.64h-2.64zM7.92 58.08h5.28v2.64h-5.28zM15.84 58.08h2.64v2.64h-2.64zM21.12 58.08h5.28v2.64h-5.28zM31.68 58.08h2.64v2.64h-2.64zM36.96 58.08h7.92v2.64h-7.92zM52.80 58.08h2.64v2.64h-2.64zM58.08 58.08h2.64v2.64h-2.64zM63.36 58.08h2.64v2.64h-2.64zM68.64 58.08h7.92v2.64h-7.92zM81.84 58.08h10.56v2.64h-10.56zM95.04 58.08h2.64v2.64h-2.64zM100.32 58.08h2.64v2.64h-2.64zM105.60 58.08h5.28v2.64h-5.28zM5.28 60.72h7.92v2.64h-7.92zM21.12 60.72h5.28v2.64h-5.28zM29.04 60.72h5.28v2.64h-5.28zM36.96 60.72h7.92v2.64h-7.92zM47.52 60.72h2.64v2.64h-2.64zM52.80 60.72h2.64v2.64h-2.64zM63.36 60.72h2.64v2.64h-2.64zM71.28 60.72h10.56v2.64h-10.56zM84.48 60.72h7.92v2.64h-7.92zM95.04 60.72h2.64v2.64h-2.64zM105.60 60.72h2.64v2.64h-2.64zM0.00 63.36h2.64v2.64h-2.64zM5.28 63.36h2.64v2.64h-2.64zM10.56 63.36h15.84v2.64h-15.84zM29.04 63.36h10.56v2.64h-10.56zM44.88 63.36h5.28v2.64h-5.28zM52.80 63.36h13.20v2.64h-13.20zM68.64 63.36h2.64v2.64h-2.64zM79.20 63.36h5.28v2.64h-5.28zM92.40 63.36h23.76v2.64h-23.76zM5.28 66.00h2.64v2.64h-2.64zM10.56 66.00h5.28v2.64h-5.28zM23.76 66.00h2.64v2.64h-2.64zM31.68 66.00h13.20v2.64h-13.20zM50.16 66.00h7.92v2.64h-7.92zM60.72 66.00h7.92v2.64h-7.92zM73.92 66.00h7.92v2.64h-7.92zM87.12 66.00h5.28v2.64h-5.28zM95.04 66.00h7.92v2.64h-7.92zM105.60 66.00h2.64v2.64h-2.64zM110.88 66.00h5.28v2.64h-5.28zM2.64 68.64h5.28v2.64h-5.28zM10.56 68.64h7.92v2.64h-7.92zM21.12 68.64h2.64v2.64h-2.64zM26.40 68.64h2.64v2.64h-2.64zM31.68 68.64h7.92v2.64h-7.92zM47.52 68.64h2.64v2.64h-2.64zM52.80 68.64h2.64v2.64h-2.64zM58.08 68.64h5.28v2.64h-5.28zM68.64 68.64h5.28v2.64h-5.28zM79.20 68.64h5.28v2.64h-5.28zM89.76 68.64h5.28v2.64h-5.28zM97.68 68.64h2.64v2.64h-2.64zM108.24 68.64h2.64v2.64h-2.64zM113.52 68.64h5.28v2.64h-5.28zM5.28 71.28h7.92v2.64h-7.92zM18.48 71.28h7.92v2.64h-7.92zM31.68 71.28h2.64v2.64h-2.64zM39.60 71.28h2.64v2.64h-2.64zM44.88 71.28h2.64v2.64h-2.64zM55.44 71.28h5.28v2.64h-5.28zM63.36 71.28h2.64v2.64h-2.64zM68.64 71.28h7.92v2.64h-7.92zM79.20 71.28h5.28v2.64h-5.28zM89.76 71.28h21.12v2.64h-21.12zM113.52 71.28h2.64v2.64h-2.64zM0.00 73.92h2.64v2.64h-2.64zM10.56 73.92h2.64v2.64h-2.64zM15.84 73.92h5.28v2.64h-5.28zM23.76 73.92h2.64v2.64h-2.64zM36.96 73.92h2.64v2.64h-2.64zM42.24 73.92h2.64v2.64h-2.64zM50.16 73.92h2.64v2.64h-2.64zM58.08 73.92h5.28v2.64h-5.28zM66.00 73.92h2.64v2.64h-2.64zM71.28 73.92h2.64v2.64h-2.64zM76.56 73.92h2.64v2.64h-2.64zM84.48 73.92h5.28v2.64h-5.28zM92.40 73.92h10.56v2.64h-10.56zM110.88 73.92h2.64v2.64h-2.64zM116.16 73.92h2.64v2.64h-2.64zM5.28 76.56h2.64v2.64h-2.64zM21.12 76.56h2.64v2.64h-2.64zM29.04 76.56h2.64v2.64h-2.64zM34.32 76.56h2.64v2.64h-2.64zM42.24 76.56h2.64v2.64h-2.64zM47.52 76.56h5.28v2.64h-5.28zM55.44 76.56h2.64v2.64h-2.64zM60.72 76.56h2.64v2.64h-2.64zM73.92 76.56h10.56v2.64h-10.56zM87.12 76.56h2.64v2.64h-2.64zM95.04 76.56h5.28v2.64h-5.28zM102.96 76.56h15.84v2.64h-15.84zM5.28 79.20h2.64v2.64h-2.64zM10.56 79.20h7.92v2.64h-7.92zM21.12 79.20h7.92v2.64h-7.92zM36.96 79.20h7.92v2.64h-7.92zM50.16 79.20h2.64v2.64h-2.64zM55.44 79.20h2.64v2.64h-2.64zM63.36 79.20h2.64v2.64h-2.64zM68.64 79.20h2.64v2.64h-2.64zM73.92 79.20h7.92v2.64h-7.92zM84.48 79.20h2.64v2.64h-2.64zM92.40 79.20h5.28v2.64h-5.28zM108.24 79.20h10.56v2.64h-10.56zM7.92 81.84h2.64v2.64h-2.64zM18.48 81.84h2.64v2.64h-2.64zM23.76 81.84h15.84v2.64h-15.84zM50.16 81.84h2.64v2.64h-2.64zM55.44 81.84h2.64v2.64h-2.64zM63.36 81.84h2.64v2.64h-2.64zM71.28 81.84h2.64v2.64h-2.64zM76.56 81.84h7.92v2.64h-7.92zM92.40 81.84h2.64v2.64h-2.64zM97.68 81.84h5.28v2.64h-5.28zM116.16 81.84h2.64v2.64h-2.64zM7.92 84.48h2.64v2.64h-2.64zM15.84 84.48h7.92v2.64h-7.92zM26.40 84.48h2.64v2.64h-2.64zM31.68 84.48h7.92v2.64h-7.92zM42.24 84.48h10.56v2.64h-10.56zM63.36 84.48h2.64v2.64h-2.64zM68.64 84.48h2.64v2.64h-2.64zM79.20 84.48h2.64v2.64h-2.64zM89.76 84.48h10.56v2.64h-10.56zM113.52 84.48h5.28v2.64h-5.28zM0.00 87.12h2.64v2.64h-2.64zM5.28 87.12h10.56v2.64h-10.56zM18.48 87.12h5.28v2.64h-5.28zM26.40 87.12h5.28v2.64h-5.28zM42.24 87.12h7.92v2.64h-7.92zM52.80 87.12h2.64v2.64h-2.64zM60.72 87.12h2.64v2.64h-2.64zM66.00 87.12h2.64v2.64h-2.64zM71.28 87.12h7.92v2.64h-7.92zM84.48 87.12h7.92v2.64h-7.92zM95.04 87.12h7.92v2.64h-7.92zM105.60 87.12h2.64v2.64h-2.64zM110.88 87.12h5.28v2.64h-5.28zM0.00 89.76h5.28v2.64h-5.28zM7.92 89.76h2.64v2.64h-2.64zM15.84 89.76h2.64v2.64h-2.64zM23.76 89.76h7.92v2.64h-7.92zM34.32 89.76h2.64v2.64h-2.64zM39.60 89.76h7.92v2.64h-7.92zM52.80 89.76h2.64v2.64h-2.64zM58.08 89.76h5.28v2.64h-5.28zM73.92 89.76h7.92v2.64h-7.92zM89.76 89.76h5.28v2.64h-5.28zM100.32 89.76h5.28v2.64h-5.28zM108.24 89.76h7.92v2.64h-7.92zM2.64 92.40h10.56v2.64h-10.56zM18.48 92.40h7.92v2.64h-7.92zM31.68 92.40h2.64v2.64h-2.64zM36.96 92.40h5.28v2.64h-5.28zM50.16 92.40h5.28v2.64h-5.28zM58.08 92.40h13.20v2.64h-13.20zM81.84 92.40h5.28v2.64h-5.28zM89.76 92.40h2.64v2.64h-2.64zM97.68 92.40h2.64v2.64h-2.64zM105.60 92.40h5.28v2.64h-5.28zM10.56 95.04h7.92v2.64h-7.92zM21.12 95.04h5.28v2.64h-5.28zM34.32 95.04h7.92v2.64h-7.92zM44.88 95.04h2.64v2.64h-2.64zM52.80 95.04h15.84v2.64h-15.84zM73.92 95.04h5.28v2.64h-5.28zM81.84 95.04h2.64v2.64h-2.64zM87.12 95.04h2.64v2.64h-2.64zM95.04 95.04h13.20v2.64h-13.20zM110.88 95.04h2.64v2.64h-2.64zM34.32 97.68h2.64v2.64h-2.64zM39.60 97.68h2.64v2.64h-2.64zM44.88 97.68h2.64v2.64h-2.64zM50.16 97.68h5.28v2.64h-5.28zM63.36 97.68h2.64v2.64h-2.64zM68.64 97.68h18.48v2.64h-18.48zM89.76 97.68h7.92v2.64h-7.92zM105.60 97.68h5.28v2.64h-5.28zM0.00 100.32h18.48v2.64h-18.48zM21.12 100.32h2.64v2.64h-2.64zM26.40 100.32h7.92v2.64h-7.92zM42.24 100.32h2.64v2.64h-2.64zM47.52 100.32h2.64v2.64h-2.64zM52.80 100.32h2.64v2.64h-2.64zM58.08 100.32h2.64v2.64h-2.64zM63.36 100.32h5.28v2.64h-5.28zM76.56 100.32h5.28v2.64h-5.28zM84.48 100.32h2.64v2.64h-2.64zM89.76 100.32h2.64v2.64h-2.64zM95.04 100.32h2.64v2.64h-2.64zM100.32 100.32h2.64v2.64h-2.64zM105.60 100.32h13.20v2.64h-13.20zM0.00 102.96h2.64v2.64h-2.64zM15.84 102.96h2.64v2.64h-2.64zM21.12 102.96h5.28v2.64h-5.28zM29.04 102.96h13.20v2.64h-13.20zM47.52 102.96h2.64v2.64h-2.64zM52.80 102.96h2.64v2.64h-2.64zM63.36 102.96h2.64v2.64h-2.64zM68.64 102.96h2.64v2.64h-2.64zM79.20 102.96h2.64v2.64h-2.64zM87.12 102.96h5.28v2.64h-5.28zM95.04 102.96h2.64v2.64h-2.64zM105.60 102.96h2.64v2.64h-2.64zM110.88 102.96h7.92v2.64h-7.92zM0.00 105.60h2.64v2.64h-2.64zM5.28 105.60h7.92v2.64h-7.92zM15.84 105.60h2.64v2.64h-2.64zM21.12 105.60h2.64v2.64h-2.64zM26.40 105.60h5.28v2.64h-5.28zM36.96 105.60h2.64v2.64h-2.64zM52.80 105.60h13.20v2.64h-13.20zM71.28 105.60h2.64v2.64h-2.64zM81.84 105.60h2.64v2.64h-2.64zM89.76 105.60h29.04v2.64h-29.04zM0.00 108.24h2.64v2.64h-2.64zM5.28 108.24h7.92v2.64h-7.92zM15.84 108.24h2.64v2.64h-2.64zM21.12 108.24h7.92v2.64h-7.92zM34.32 108.24h2.64v2.64h-2.64zM39.60 108.24h2.64v2.64h-2.64zM50.16 108.24h5.28v2.64h-5.28zM58.08 108.24h2.64v2.64h-2.64zM66.00 108.24h2.64v2.64h-2.64zM76.56 108.24h2.64v2.64h-2.64zM84.48 108.24h2.64v2.64h-2.64zM89.76 108.24h2.64v2.64h-2.64zM97.68 108.24h2.64v2.64h-2.64zM102.96 108.24h5.28v2.64h-5.28zM113.52 108.24h5.28v2.64h-5.28zM0.00 110.88h2.64v2.64h-2.64zM5.28 110.88h7.92v2.64h-7.92zM15.84 110.88h2.64v2.64h-2.64zM21.12 110.88h2.64v2.64h-2.64zM29.04 110.88h2.64v2.64h-2.64zM34.32 110.88h2.64v2.64h-2.64zM39.60 110.88h2.64v2.64h-2.64zM52.80 110.88h7.92v2.64h-7.92zM68.64 110.88h2.64v2.64h-2.64zM79.20 110.88h10.56v2.64h-10.56zM0.00 113.52h2.64v2.64h-2.64zM15.84 113.52h2.64v2.64h-2.64zM21.12 113.52h2.64v2.64h-2.64zM26.40 113.52h2.64v2.64h-2.64zM31.68 113.52h7.92v2.64h-7.92zM47.52 113.52h2.64v2.64h-2.64zM58.08 113.52h13.20v2.64h-13.20zM76.56 113.52h2.64v2.64h-2.64zM81.84 113.52h5.28v2.64h-5.28zM95.04 113.52h7.92v2.64h-7.92zM110.88 113.52h7.92v2.64h-7.92zM0.00 116.16h18.48v2.64h-18.48zM23.76 116.16h10.56v2.64h-10.56zM36.96 116.16h2.64v2.64h-2.64zM42.24 116.16h2.64v2.64h-2.64zM47.52 116.16h5.28v2.64h-5.28zM55.44 116.16h2.64v2.64h-2.64zM60.72 116.16h5.28v2.64h-5.28zM76.56 116.16h2.64v2.64h-2.64zM84.48 116.16h2.64v2.64h-2.64zM89.76 116.16h2.64v2.64h-2.64zM97.68 116.16h5.28v2.64h-5.28zM108.24 116.16h5.28v2.64h-5.28zM116.16 116.16h2.64v2.64h-2.64z" fill="#000" shape-rendering="crispEdges"/></svg>
<div class="t" style="left:431.8px;top:789.72px;font-size:17px;font-weight:bold;color:#000;">Item</div>
<div class="t" style="left:483.5px;top:789.72px;font-size:17px;font-weight:bold;color:#000;">Part Number/Description</div>
<div class="t" style="left:774.5px;top:789.72px;font-size:17px;font-weight:bold;color:#000;">Type</div>
<div class="t" style="left:910.0px;top:789.72px;font-size:17px;font-weight:bold;color:#000;">CD</div>
<div class="t" style="left:1003.0px;top:789.72px;font-size:17px;font-weight:bold;color:#000;">QTY UOM</div>
<div class="t" style="right:668.9px;top:789.72px;font-size:17px;font-weight:bold;color:#000;">Unit Price</div>
<div class="t" style="right:602.9px;top:789.72px;font-size:17px;font-weight:bold;color:#000;">Disc</div>
<div class="t" style="right:465.9px;top:789.72px;font-size:17px;font-weight:bold;color:#000;">Total Price</div>
<div class="t" style="left:442.0px;top:828.45px;font-size:17.4px;color:#000;">1</div>
<div class="t" style="left:776.0px;top:828.45px;font-size:17.4px;color:#000;">Charge</div>
<div class="t" style="left:1032.0px;top:828.45px;font-size:17.4px;color:#000;">1</div>
<div class="t" style="right:668.4px;top:828.45px;font-size:17.4px;color:#000;">29.00</div>
<div class="t" style="right:602.9px;top:828.45px;font-size:17.4px;color:#000;">0%</div>
<div class="t" style="right:465.4px;top:828.45px;font-size:17.4px;color:#000;">29.00</div>
<div class="t" style="left:480.5px;top:814.75px;font-size:17.4px;color:#000;">HAZ PACKING / HAZARD</div>
<div class="t" style="left:480.5px;top:833.15px;font-size:17.4px;color:#000;">MATERIAL PACKING</div>
<div class="t" style="left:483.5px;top:858.45px;font-size:17.4px;color:#000;">Notes:</div>
<div class="t" style="left:483.5px;top:878.35px;font-size:17.4px;color:#000;">For the battery</div>
<div class="t" style="left:442.0px;top:921.95px;font-size:17.4px;color:#000;">2</div>
<div class="t" style="left:776.0px;top:921.95px;font-size:17.4px;color:#000;">Charge</div>
<div class="t" style="left:1032.0px;top:921.95px;font-size:17.4px;color:#000;">1</div>
<div class="t" style="right:668.4px;top:921.95px;font-size:17.4px;color:#000;">95.00</div>
<div class="t" style="right:602.9px;top:921.95px;font-size:17.4px;color:#000;">0%</div>
<div class="t" style="right:465.4px;top:921.95px;font-size:17.4px;color:#000;">95.00</div>
<div class="t" style="left:480.5px;top:921.95px;font-size:17.4px;color:#000;">AOG FEE / EXPEDITE FEE</div>
<div class="t" style="left:483.5px;top:946.85px;font-size:17.4px;color:#000;">Notes:</div>
<div class="t" style="left:483.5px;top:967.25px;font-size:17.4px;color:#000;">Expedite overnight</div>
<div class="t" style="left:442.0px;top:1010.95px;font-size:17.4px;color:#000;">3</div>
<div class="t" style="left:776.0px;top:1010.95px;font-size:17.4px;color:#000;">Outright</div>
<div class="t" style="left:919.0px;top:1010.95px;font-size:17.4px;color:#000;">AR</div>
<div class="t" style="left:1032.0px;top:1010.95px;font-size:17.4px;color:#000;">1 EA</div>
<div class="t" style="right:668.4px;top:1010.95px;font-size:17.4px;color:#000;">730.00</div>
<div class="t" style="right:602.9px;top:1010.95px;font-size:17.4px;color:#000;">0%</div>
<div class="t" style="right:465.4px;top:1010.95px;font-size:17.4px;color:#000;">730.00</div>
<div class="t" style="left:480.5px;top:1010.95px;font-size:17.4px;color:#000;">A3-06-2880 / ARTEX ELT345</div>
<div class="t" style="left:483.5px;top:1035.45px;font-size:17.4px;color:#000;">Traceability: 145 Repair Station</div>
</div></div>
<div class="abs" style="left:1530px;top:243px;width:1px;height:805px;background:#9a9a9a"></div>
<div class="abs" style="left:1531px;top:243px;width:11px;height:805px;background:#dedede"></div>
<div class="abs" style="left:1537.7px;top:243px;width:2.8px;height:533px;background:#c0c0c0"></div>
<div class="abs" style="left:1540.5px;top:243px;width:1.5px;height:805px;background:#e9e9e9"></div>

</body></html>
